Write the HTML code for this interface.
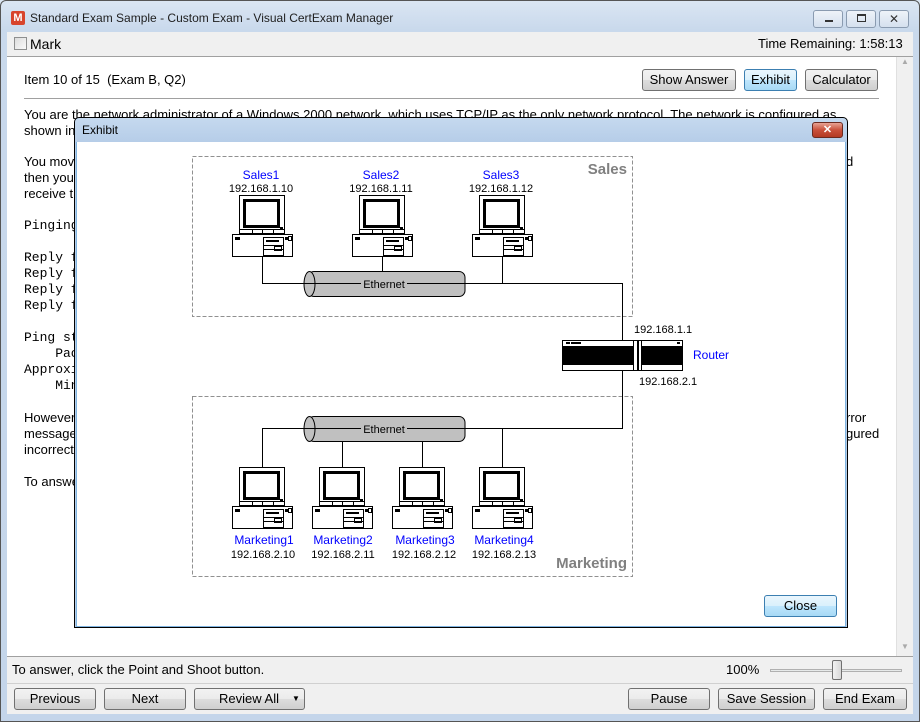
<!DOCTYPE html>
<html><head><meta charset="utf-8"><style>
*{margin:0;padding:0;box-sizing:border-box}
body{width:920px;height:722px;overflow:hidden;font-family:"Liberation Sans",Arial,sans-serif;font-size:12px;color:#000;background:#fff}
.win{position:absolute;left:0;top:0;width:920px;height:722px;background:linear-gradient(#dbe6f3,#c9d9ec 30px,#c4d5ea)}
.a{position:absolute}
.btn{position:absolute;height:22px;border:1px solid #707070;border-radius:3px;background:linear-gradient(#f2f2f2,#ebebeb 50%,#dddddd 50%,#cfcfcf);text-align:center;line-height:20px;font-size:13px}
.wb{position:absolute;top:10px;height:18px;border:1px solid #8a9bb0;border-radius:3px;background:linear-gradient(#eef3f9,#d5e0ee)}
.t{position:absolute;left:24px;font-size:13px;white-space:nowrap}
.m{position:absolute;left:24px;font-family:"Liberation Mono",monospace;font-size:13px;white-space:pre}
</style></head><body>
<div class="win">
<div class="a" style="left:11px;top:11px;width:14px;height:14px;background:#d8442c;border-radius:2px;color:#fff;font-size:11px;font-weight:bold;text-align:center;line-height:14px">M</div>
<div class="a" style="left:30px;top:11px;font-size:12px;color:#1e1e1e">Standard Exam Sample - Custom Exam - Visual CertExam Manager</div>
<div class="wb" style="left:813px;width:30px"><div class="a" style="left:11px;top:9px;width:8px;height:2px;background:#333"></div></div>
<div class="wb" style="left:846px;width:30px"><div class="a" style="left:10px;top:3px;width:9px;height:8px;border:1px solid #333;border-top-width:2px"></div></div>
<div class="wb" style="left:879px;width:30px;text-align:center;line-height:16px;font-size:12px;color:#333">✕</div>
<div class="a" style="left:7px;top:32px;width:906px;height:682px;background:#f0f0f0"></div>
<div class="a" style="left:14px;top:37px;width:13px;height:13px;border:1px solid #8e8f8f;background:linear-gradient(135deg,#dcdcdc,#fafafa)"></div>
<div class="a" style="left:30px;top:36px;font-size:14px">Mark</div>
<div class="a" style="left:758px;top:36px;font-size:13px">Time Remaining: 1:58:13</div>
<div class="a" style="left:7px;top:56px;width:906px;height:1px;background:#a0a0a0"></div>
<div class="a" style="left:7px;top:57px;width:889px;height:600px;background:#fff;overflow:hidden"></div>
<div class="a" style="left:896px;top:57px;width:17px;height:600px;background:#f0f0f0;border-left:1px solid #e0e0e0;color:#aaa;font-size:8px;text-align:center">▲<div class="a" style="left:4px;top:585px">▼</div></div>
<div class="a" style="left:7px;top:656px;width:906px;height:1px;background:#a0a0a0"></div>
<div class="t" style="top:72px;font-size:13px">Item 10 of 15&nbsp; (Exam B, Q2)</div>
<div class="btn" style="left:642px;top:69px;width:94px">Show Answer</div>
<div class="btn" style="left:744px;top:69px;width:53px;border-color:#3c7fb1;background:linear-gradient(#eaf6fd,#d9f0fc 50%,#bee6fd 50%,#a7d9f5)">Exhibit</div>
<div class="btn" style="left:805px;top:69px;width:73px">Calculator</div>
<div class="a" style="left:24px;top:98px;width:855px;height:1px;background:#a0a0a0"></div>
<div class="t" style="top:107px">You are the network administrator of a Windows 2000 network, which uses TCP/IP as the only network protocol. The network is configured as</div>
<div class="t" style="top:123px">shown in</div>
<div class="t" style="top:154px">You move</div><div class="a" style="left:846px;top:154px;font-size:13px">d</div>
<div class="t" style="top:170px">then you</div>
<div class="t" style="top:186px">receive th</div>
<div class="m" style="top:218px">Pinging</div>
<div class="m" style="top:250px">Reply f</div>
<div class="m" style="top:266px">Reply f</div>
<div class="m" style="top:282px">Reply f</div>
<div class="m" style="top:298px">Reply f</div>
<div class="m" style="top:330px">Ping st</div>
<div class="m" style="top:346px">    Pac</div>
<div class="m" style="top:362px">Approxi</div>
<div class="m" style="top:378px">    Min</div>
<div class="t" style="top:410px">However,</div><div class="a" style="left:846px;top:410px;font-size:13px">rror</div>
<div class="t" style="top:426px">message</div><div class="a" style="left:846px;top:426px;font-size:13px">gured</div>
<div class="t" style="top:442px">incorrect</div>
<div class="t" style="top:474px">To answe</div>

<div class="a" style="left:74px;top:117px;width:774px;height:511px;border:1px solid #000;border-radius:5px 5px 0 0;background:linear-gradient(#c5d9ef,#b6cde8 24px,#b6cde8);overflow:hidden">
<div class="a" style="left:7px;top:5px;font-size:12px">Exhibit</div>
<div class="a" style="left:737px;top:4px;width:31px;height:16px;border:1px solid #6b2a20;border-radius:3px;background:linear-gradient(#e8a394,#c9503b 50%,#b33a24);color:#fff;font-size:11px;font-weight:bold;text-align:center;line-height:14px">✕</div>
<div class="a" style="left:1px;top:24px;width:770px;height:485px;background:#fff;border:1px solid #7fb4e0;border-top:none"></div>
</div>
<svg class="a" style="left:0;top:0" width="920" height="722" viewBox="0 0 920 722" font-family="Liberation Sans,Arial,sans-serif">
<defs>
<g id="pc">
<rect x="7.5" y="0.5" width="45" height="38" fill="#fff" stroke="#000"/>
<rect x="12.5" y="5.5" width="34" height="26" fill="#fff" stroke="#000" stroke-width="3"/>
<line x1="8" y1="34.5" x2="52" y2="34.5" stroke="#000"/>
<line x1="20.5" y1="35" x2="20.5" y2="38" stroke="#000"/><line x1="30.5" y1="35" x2="30.5" y2="38" stroke="#000"/><line x1="41.5" y1="35" x2="41.5" y2="38" stroke="#000"/>
<rect x="48" y="32" width="3" height="2" fill="#000"/>
<rect x="0.5" y="39.5" width="60" height="22" fill="#fff" stroke="#000"/>
<rect x="3" y="42" width="5" height="3" fill="#000"/>
<rect x="31.5" y="42.5" width="20" height="18" fill="#fff" stroke="#000"/>
<line x1="34" y1="46" x2="47" y2="46" stroke="#000" stroke-width="2"/>
<line x1="32" y1="50.5" x2="51" y2="50.5" stroke="#000"/>
<line x1="32" y1="54.5" x2="51" y2="54.5" stroke="#000"/>
<rect x="42.5" y="51.5" width="7" height="4" fill="none" stroke="#000"/>
<rect x="53" y="42" width="3" height="3" fill="#000"/><rect x="56.5" y="41.5" width="3" height="4" fill="none" stroke="#000"/>
</g>
</defs>
<g stroke="#909090" stroke-dasharray="4,2" fill="none">
<rect x="192.5" y="156.5" width="440" height="160"/>
<rect x="192.5" y="396.5" width="440" height="180"/>
</g>
<text x="627" y="174" font-size="15" font-weight="bold" fill="#808080" text-anchor="end">Sales</text>
<text x="627" y="568" font-size="15" font-weight="bold" fill="#808080" text-anchor="end">Marketing</text>
<g stroke="#000" fill="none">
<path d="M262.5 257V283.5H622.5V340M382.5 257V271M502.5 257V283.5"/>
<path d="M622.5 371V428.5H262.5V467M342.5 428V467M422.5 428V467M502.5 428V467"/>
</g>
<g stroke="#000">
<rect x="308" y="271.5" width="157" height="25" rx="6" fill="#c0c0c0"/>
<ellipse cx="309.5" cy="284" rx="5.5" ry="12.5" fill="#c0c0c0"/>
<rect x="308" y="416.5" width="157" height="25" rx="6" fill="#c0c0c0"/>
<ellipse cx="309.5" cy="429" rx="5.5" ry="12.5" fill="#c0c0c0"/>
</g>
<line x1="262" y1="283.5" x2="465" y2="283.5" stroke="#000"/>
<line x1="262" y1="428.5" x2="465" y2="428.5" stroke="#000"/>
<rect x="361" y="277" width="46" height="13" fill="#c0c0c0"/>
<rect x="361" y="422" width="46" height="13" fill="#c0c0c0"/>
<text x="384" y="288" font-size="11" text-anchor="middle">Ethernet</text>
<text x="384" y="433" font-size="11" text-anchor="middle">Ethernet</text>
<use href="#pc" x="232" y="195"/><use href="#pc" x="352" y="195"/><use href="#pc" x="472" y="195"/>
<use href="#pc" x="232" y="467"/><use href="#pc" x="312" y="467"/><use href="#pc" x="392" y="467"/><use href="#pc" x="472" y="467"/>
<g font-size="12" text-anchor="middle">
<text x="261" y="179" fill="#0000ff">Sales1</text><text x="261" y="192" font-size="11">192.168.1.10</text>
<text x="381" y="179" fill="#0000ff">Sales2</text><text x="381" y="192" font-size="11">192.168.1.11</text>
<text x="501" y="179" fill="#0000ff">Sales3</text><text x="501" y="192" font-size="11">192.168.1.12</text>
<text x="264" y="544" fill="#0000ff">Marketing1</text><text x="263" y="558" font-size="11">192.168.2.10</text>
<text x="343" y="544" fill="#0000ff">Marketing2</text><text x="343" y="558" font-size="11">192.168.2.11</text>
<text x="425" y="544" fill="#0000ff">Marketing3</text><text x="424" y="558" font-size="11">192.168.2.12</text>
<text x="504" y="544" fill="#0000ff">Marketing4</text><text x="504" y="558" font-size="11">192.168.2.13</text>
</g>
<text x="634" y="333" font-size="11">192.168.1.1</text>
<text x="639" y="385" font-size="11">192.168.2.1</text>
<text x="693" y="359" font-size="12" fill="#0000ff">Router</text>
<rect x="562.5" y="340.5" width="120" height="30" fill="#fff" stroke="#000"/>
<rect x="563" y="346" width="119" height="19" fill="#000"/>
<rect x="633.5" y="340.5" width="4" height="30" fill="#fff" stroke="#000"/>
<rect x="638.5" y="340.5" width="3" height="30" fill="#fff" stroke="#000"/>
<rect x="566" y="342" width="4" height="2" fill="#000"/><rect x="571" y="342" width="10" height="2" fill="#000"/>
<rect x="677" y="342" width="3" height="2" fill="#000"/>
</svg>
<div class="btn" style="left:764px;top:595px;width:73px;height:22px;border-color:#3c7fb1;background:linear-gradient(#eaf6fd,#d9f0fc 50%,#bee6fd 50%,#a7d9f5)">Close</div>

<div class="a" style="left:12px;top:662px;font-size:13px">To answer, click the Point and Shoot button.</div>
<div class="a" style="left:726px;top:662px;font-size:13px">100%</div>
<div class="a" style="left:770px;top:669px;width:132px;height:3px;border:1px solid #b0b0b0;background:#e7eaea"></div>
<div class="a" style="left:832px;top:660px;width:10px;height:20px;border:1px solid #707070;border-radius:2px;background:linear-gradient(90deg,#f2f2f2,#d8d8d8)"></div>
<div class="a" style="left:7px;top:683px;width:906px;height:1px;background:#d0d0d0"></div>
<div class="btn" style="left:14px;top:688px;width:82px">Previous</div>
<div class="btn" style="left:104px;top:688px;width:82px">Next</div>
<div class="btn" style="left:194px;top:688px;width:111px;text-align:left;padding-left:24px">Review All<span style="position:absolute;left:97px;font-size:8px">▼</span></div>
<div class="btn" style="left:628px;top:688px;width:82px">Pause</div>
<div class="btn" style="left:718px;top:688px;width:97px">Save Session</div>
<div class="btn" style="left:823px;top:688px;width:84px">End Exam</div>
<div class="a" style="left:0;top:0;width:920px;height:722px;border:1px solid #555;border-radius:6px 6px 0 0"></div>
</div>
</body></html>
